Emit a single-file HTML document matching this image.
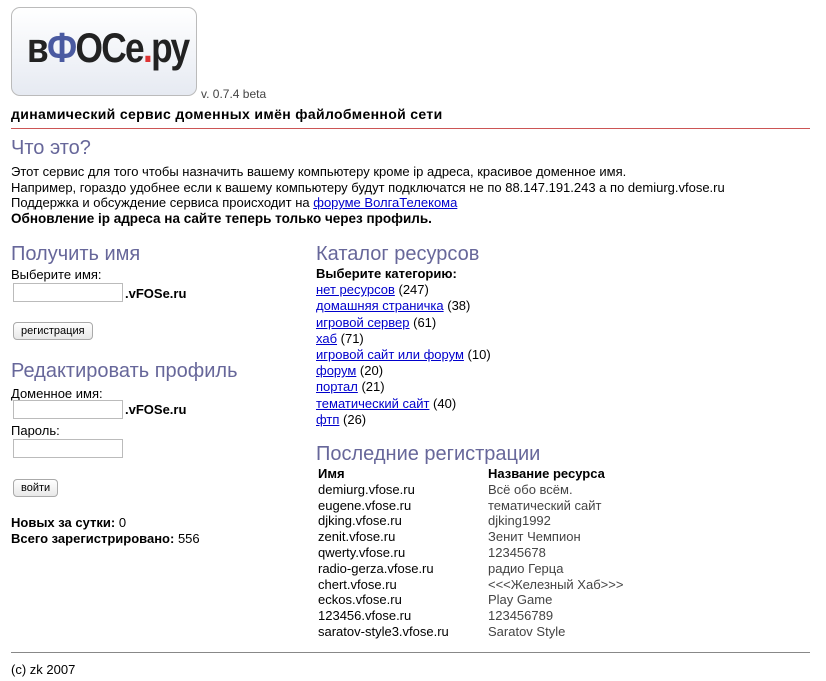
<!DOCTYPE html>
<html><head><meta charset="utf-8"><style>
body{margin:0;width:826px;height:681px;background:#fff;font-family:"Liberation Sans",Arial,sans-serif;font-size:13px;color:#000;position:relative;overflow:hidden}
.a{position:absolute;white-space:nowrap}
h2{position:absolute;margin:0;font-weight:normal;font-size:20px;color:#67679a;white-space:nowrap}
a{color:#00c}
.in{position:absolute;width:108px;height:17px;border:1px solid #bbb;background:#fff}
.btn{position:absolute;height:16px;border:1px solid #aaa;border-radius:4px;background:linear-gradient(#fff,#e8e8e8);font-size:11px;line-height:16px;padding:0 7px}
.b{font-weight:bold}
</style></head><body>
<div class="a" style="left:11px;top:7px;width:184px;height:87px;border:1px solid #bbb;border-radius:9px;background:linear-gradient(#fff,#e6eaf2)"></div>
<div class="a" style="left:27px;top:24px;font-size:42px;font-weight:bold;letter-spacing:-2px;transform:scaleX(0.84);transform-origin:left;color:#222">в<span style="color:#4a5aa0">Ф</span>ОСе<span style="color:#d33">.</span>ру</div>
<div class="a" style="left:201px;top:87px;color:#444;font-size:12px">v. 0.7.4 beta</div>
<div class="a b" style="left:11px;top:106px;font-size:14px;letter-spacing:0.35px">динамический сервис доменных имён файлобменной сети</div>
<div class="a" style="left:11px;top:128px;width:799px;height:1px;background:#c55"></div>
<h2 style="left:11px;top:137px">Что это?</h2>
<div class="a" style="left:11px;top:164px;line-height:15.5px">Этот сервис для того чтобы назначить вашему компьютеру кроме ip адреса, красивое доменное имя.<br>Например, гораздо удобнее если к вашему компьютеру будут подключатся не по 88.147.191.243 а по demiurg.vfose.ru<br>Поддержка и обсуждение сервиса происходит на <a href="#">форуме ВолгаТелекома</a><br><b style="font-size:13.5px">Обновление ip адреса на сайте теперь только через профиль.</b></div>
<h2 style="left:11px;top:243px">Получить имя</h2>
<div class="a" style="left:11px;top:267px">Выберите имя:</div>
<div class="in" style="left:13px;top:283px"></div>
<div class="a b" style="left:125px;top:286px">.vFOSe.ru</div>
<div class="btn" style="left:13px;top:322px">регистрация</div>
<h2 style="left:11px;top:360px">Редактировать профиль</h2>
<div class="a" style="left:11px;top:386px">Доменное имя:</div>
<div class="in" style="left:13px;top:400px"></div>
<div class="a b" style="left:125px;top:402px">.vFOSe.ru</div>
<div class="a" style="left:11px;top:423px">Пароль:</div>
<div class="in" style="left:13px;top:439px"></div>
<div class="btn" style="left:13px;top:479px">войти</div>
<div class="a" style="left:11px;top:515px"><b>Новых за сутки:</b> 0</div>
<div class="a" style="left:11px;top:531px"><b>Всего зарегистрировано:</b> 556</div>
<h2 style="left:316px;top:243px">Каталог ресурсов</h2>
<div class="a" style="left:316px;top:266px;line-height:16.2px"><b>Выберите категорию:</b><br><a href="#">нет ресурсов</a> (247)<br><a href="#">домашняя страничка</a> (38)<br><a href="#">игровой сервер</a> (61)<br><a href="#">хаб</a> (71)<br><a href="#">игровой сайт или форум</a> (10)<br><a href="#">форум</a> (20)<br><a href="#">портал</a> (21)<br><a href="#">тематический сайт</a> (40)<br><a href="#">фтп</a> (26)</div>
<h2 style="left:316px;top:443px">Последние регистрации</h2>
<div class="a" style="left:318px;top:466px;line-height:15.8px"><b>Имя</b><br>demiurg.vfose.ru<br>eugene.vfose.ru<br>djking.vfose.ru<br>zenit.vfose.ru<br>qwerty.vfose.ru<br>radio-gerza.vfose.ru<br>chert.vfose.ru<br>eckos.vfose.ru<br>123456.vfose.ru<br>saratov-style3.vfose.ru</div>
<div class="a" style="left:488px;top:466px;line-height:15.8px;color:#444"><b style="color:#000">Название ресурса</b><br>Всё обо всём.<br>тематический сайт<br>djking1992<br>Зенит Чемпион<br>12345678<br>радио Герца<br>&lt;&lt;&lt;Железный Хаб&gt;&gt;&gt;<br>Play Game<br>123456789<br>Saratov Style</div>
<div class="a" style="left:11px;top:652px;width:799px;height:1px;background:#888"></div>
<div class="a" style="left:11px;top:662px">(c) zk 2007</div>
</body></html>
